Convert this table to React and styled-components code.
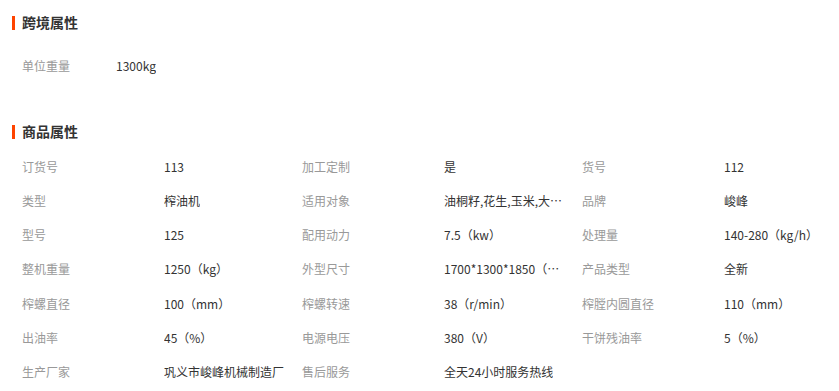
import React from "react";
import styled, { createGlobalStyle } from "styled-components";

const GlobalStyle = createGlobalStyle`
  body {
    margin: 0;
    background: #fff;
    font-family: "Microsoft YaHei", "Noto Sans CJK SC", "Noto Sans", sans-serif;
  }
`;

const Page = styled.div`
  width: 839px;
  padding: 12px 0 0 12px;
  box-sizing: border-box;
`;

const Section = styled.section`
  margin-bottom: ${(props) => props.gapAfter || 0}px;
`;

const Title = styled.h2`
  position: relative;
  margin: 0;
  height: 20px;
  line-height: 20px;
  padding-left: 10px;
  font-size: 14px;
  font-weight: bold;
  color: #333;

  &::before {
    content: "";
    position: absolute;
    left: 0;
    top: 4px;
    width: 3px;
    height: 14px;
    background: #ff4400;
  }
`;

const Grid = styled.div`
  display: grid;
  grid-template-columns: repeat(3, 280px);
  grid-auto-rows: 34.2px;
  padding-left: 10px;
  margin-top: ${(props) => props.top}px;
`;

const Item = styled.div`
  display: flex;
  align-items: center;
  font-size: 12px;
  min-width: 0;
`;

const Label = styled.span`
  flex: 0 0 ${(props) => props.width}px;
  color: #999;
`;

const Value = styled.span`
  max-width: 124px;
  color: #333;
  white-space: nowrap;
  overflow: hidden;
  text-overflow: ellipsis;
`;

const crossBorder = [["单位重量", "1300kg"]];

const goods = [
  ["订货号", "113"],
  ["加工定制", "是"],
  ["货号", "112"],
  ["类型", "榨油机"],
  ["适用对象", "油桐籽,花生,玉米,大豆,芝麻"],
  ["品牌", "峻峰"],
  ["型号", "125"],
  ["配用动力", "7.5（kw）"],
  ["处理量", "140-280（kg/h）"],
  ["整机重量", "1250（kg）"],
  ["外型尺寸", "1700*1300*1850（mm）"],
  ["产品类型", "全新"],
  ["榨螺直径", "100（mm）"],
  ["榨螺转速", "38（r/min）"],
  ["榨膛内圆直径", "110（mm）"],
  ["出油率", "45（%）"],
  ["电源电压", "380（V）"],
  ["干饼残油率", "5（%）"],
  ["生产厂家", "巩义市峻峰机械制造厂"],
  ["售后服务", "全天24小时服务热线"],
];

function App() {
  return (
    <>
      <GlobalStyle />
      <Page>
        <Section gapAfter={39}>
          <Title>跨境属性</Title>
          <Grid top={16}>
            {crossBorder.map(([k, v]) => (
              <Item key={k}>
                <Label width={94}>{k}</Label>
                <Value>{v}</Value>
              </Item>
            ))}
          </Grid>
        </Section>
        <Section>
          <Title>商品属性</Title>
          <Grid top={8}>
            {goods.map(([k, v]) => (
              <Item key={k}>
                <Label width={142}>{k}</Label>
                <Value>{v}</Value>
              </Item>
            ))}
          </Grid>
        </Section>
      </Page>
    </>
  );
}

export default App;
